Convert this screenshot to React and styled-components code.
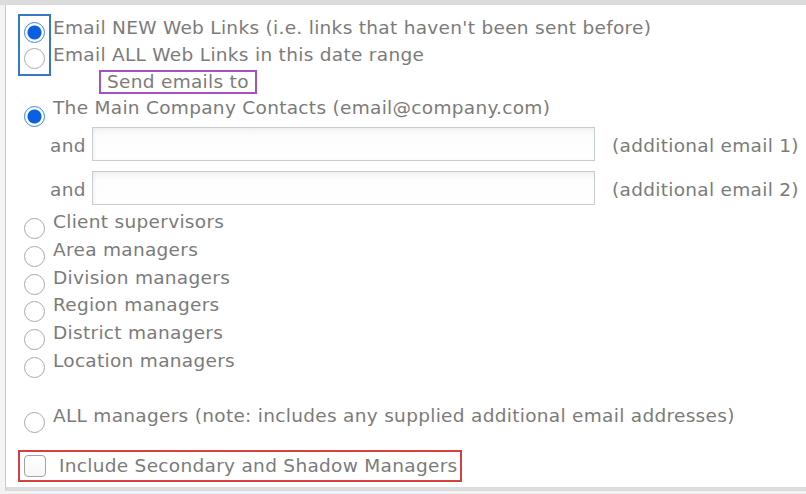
import React from "react";
import styled, { createGlobalStyle } from "styled-components";

const Global = createGlobalStyle`
  * { box-sizing: border-box; }
  html, body { margin: 0; padding: 0; background: #f3f3f3; }
`;

const Frame = styled.div`
  width: 806px;
  height: 494px;
  background: #f3f3f3;
  border-top: 5px solid #dcdcdc;
  padding: 0 0 3px 5px;
  overflow: hidden;
`;

const Panel = styled.div`
  height: 100%;
  background: #fff;
  border-left: 1px solid #c8c8c8;
  border-bottom: 4px solid #dcdcdc;
  padding: 9px 0 0 12px;
  display: flex;
  flex-direction: column;
  font-family: "DejaVu Sans", "Verdana", sans-serif;
  font-size: 18.5px;
  letter-spacing: 0.3px;
  color: #7b7b7b;
`;

const ModeBlock = styled.div`
  display: flex;
  align-items: flex-start;
`;

const RadioFrame = styled.div`
  width: 33px;
  height: 62px;
  border: 2px solid #3478c6;
  display: flex;
  flex-direction: column;
  gap: 5px;
  padding: 6px 0 0 4px;
`;

const ModeLabels = styled.div`
  margin-left: 2px;
  line-height: 27px;
  white-space: nowrap;
`;

const Radio = styled.span`
  flex: none;
  display: block;
  width: 21px;
  height: 21px;
  border-radius: 50%;
  margin-top: ${(p) => p.$top || 0}px;
  border: 1px solid ${(p) => (p.$checked ? "#3c82ea" : "#a9a9a9")};
  background: ${(p) =>
    p.$checked
      ? "radial-gradient(circle, #0b5fe3 0 6.5px, #ffffff 7.5px 100%)"
      : "#fff"};
`;

const SendTo = styled.div`
  align-self: flex-start;
  margin: -6px 0 0 81px;
  border: 2px solid #a551c3;
  padding: 0 6px;
  line-height: 20px;
  white-space: nowrap;
`;

const Option = styled.div`
  display: flex;
  align-items: flex-start;
  padding-left: 6px;
  height: ${(p) => p.$lh || 27.8}px;
  line-height: ${(p) => p.$lh || 27.8}px;
  margin-top: ${(p) => p.$mt || 0}px;
  white-space: nowrap;
`;

const OptionText = styled.span`
  margin-left: 8px;
`;

const AndRow = styled.div`
  display: flex;
  align-items: center;
  height: 34px;
  margin-top: ${(p) => p.$mt}px;
  padding-left: 32px;
  white-space: nowrap;
`;

const AndLabel = styled.span`
  width: 42px;
  padding-top: 2px;
`;

const EmailInput = styled.input`
  width: 503px;
  height: 34px;
  border: 1px solid #c6cdcc;
  background: linear-gradient(180deg, #f3f3f3 0, #fdfdfd 8px, #fff 100%);
  box-shadow: inset 2px 0 3px rgba(0, 0, 0, 0.04);
  outline: none;
  margin: 0;
  padding: 0 6px;
  font: inherit;
`;

const Hint = styled.span`
  margin-left: 17px;
  padding-top: 2px;
`;

const CheckFrame = styled.label`
  align-self: flex-start;
  margin-top: 20px;
  display: flex;
  align-items: center;
  height: 32px;
  border: 2px solid #d8403d;
  padding: 0 3px 0 4px;
  line-height: 28px;
  white-space: nowrap;
`;

const CheckBox = styled.span`
  width: 22px;
  height: 22px;
  border: 1px solid #a3a3a3;
  border-radius: 4px;
  background: linear-gradient(180deg, #ffffff, #f7f7f7);
`;

const CheckText = styled.span`
  margin-left: 13px;
`;

const managers = [
  "Client supervisors",
  "Area managers",
  "Division managers",
  "Region managers",
  "District managers",
  "Location managers",
];

export default function App() {
  return (
    <>
      <Global />
      <Frame>
        <Panel>
          <ModeBlock>
            <RadioFrame>
              <Radio $checked />
              <Radio />
            </RadioFrame>
            <ModeLabels>
              <div>Email NEW Web Links (i.e. links that haven't been sent before)</div>
              <div>Email ALL Web Links in this date range</div>
            </ModeLabels>
          </ModeBlock>
          <SendTo>Send emails to</SendTo>
          <Option $lh={27}>
            <Radio $checked $top={12} />
            <OptionText>The Main Company Contacts (email@company.com)</OptionText>
          </Option>
          <AndRow $mt={6}>
            <AndLabel>and</AndLabel>
            <EmailInput type="text" />
            <Hint>(additional email 1)</Hint>
          </AndRow>
          <AndRow $mt={10}>
            <AndLabel>and</AndLabel>
            <EmailInput type="text" />
            <Hint>(additional email 2)</Hint>
          </AndRow>
          {managers.map((m, i) => (
            <Option key={m} $mt={i === 0 ? 3 : 0}>
              <Radio $top={10} />
              <OptionText>{m}</OptionText>
            </Option>
          ))}
          <Option $mt={27}>
            <Radio $top={10} />
            <OptionText>
              ALL managers (note: includes any supplied additional email addresses)
            </OptionText>
          </Option>
          <CheckFrame>
            <CheckBox />
            <CheckText>Include Secondary and Shadow Managers</CheckText>
          </CheckFrame>
        </Panel>
      </Frame>
    </>
  );
}
